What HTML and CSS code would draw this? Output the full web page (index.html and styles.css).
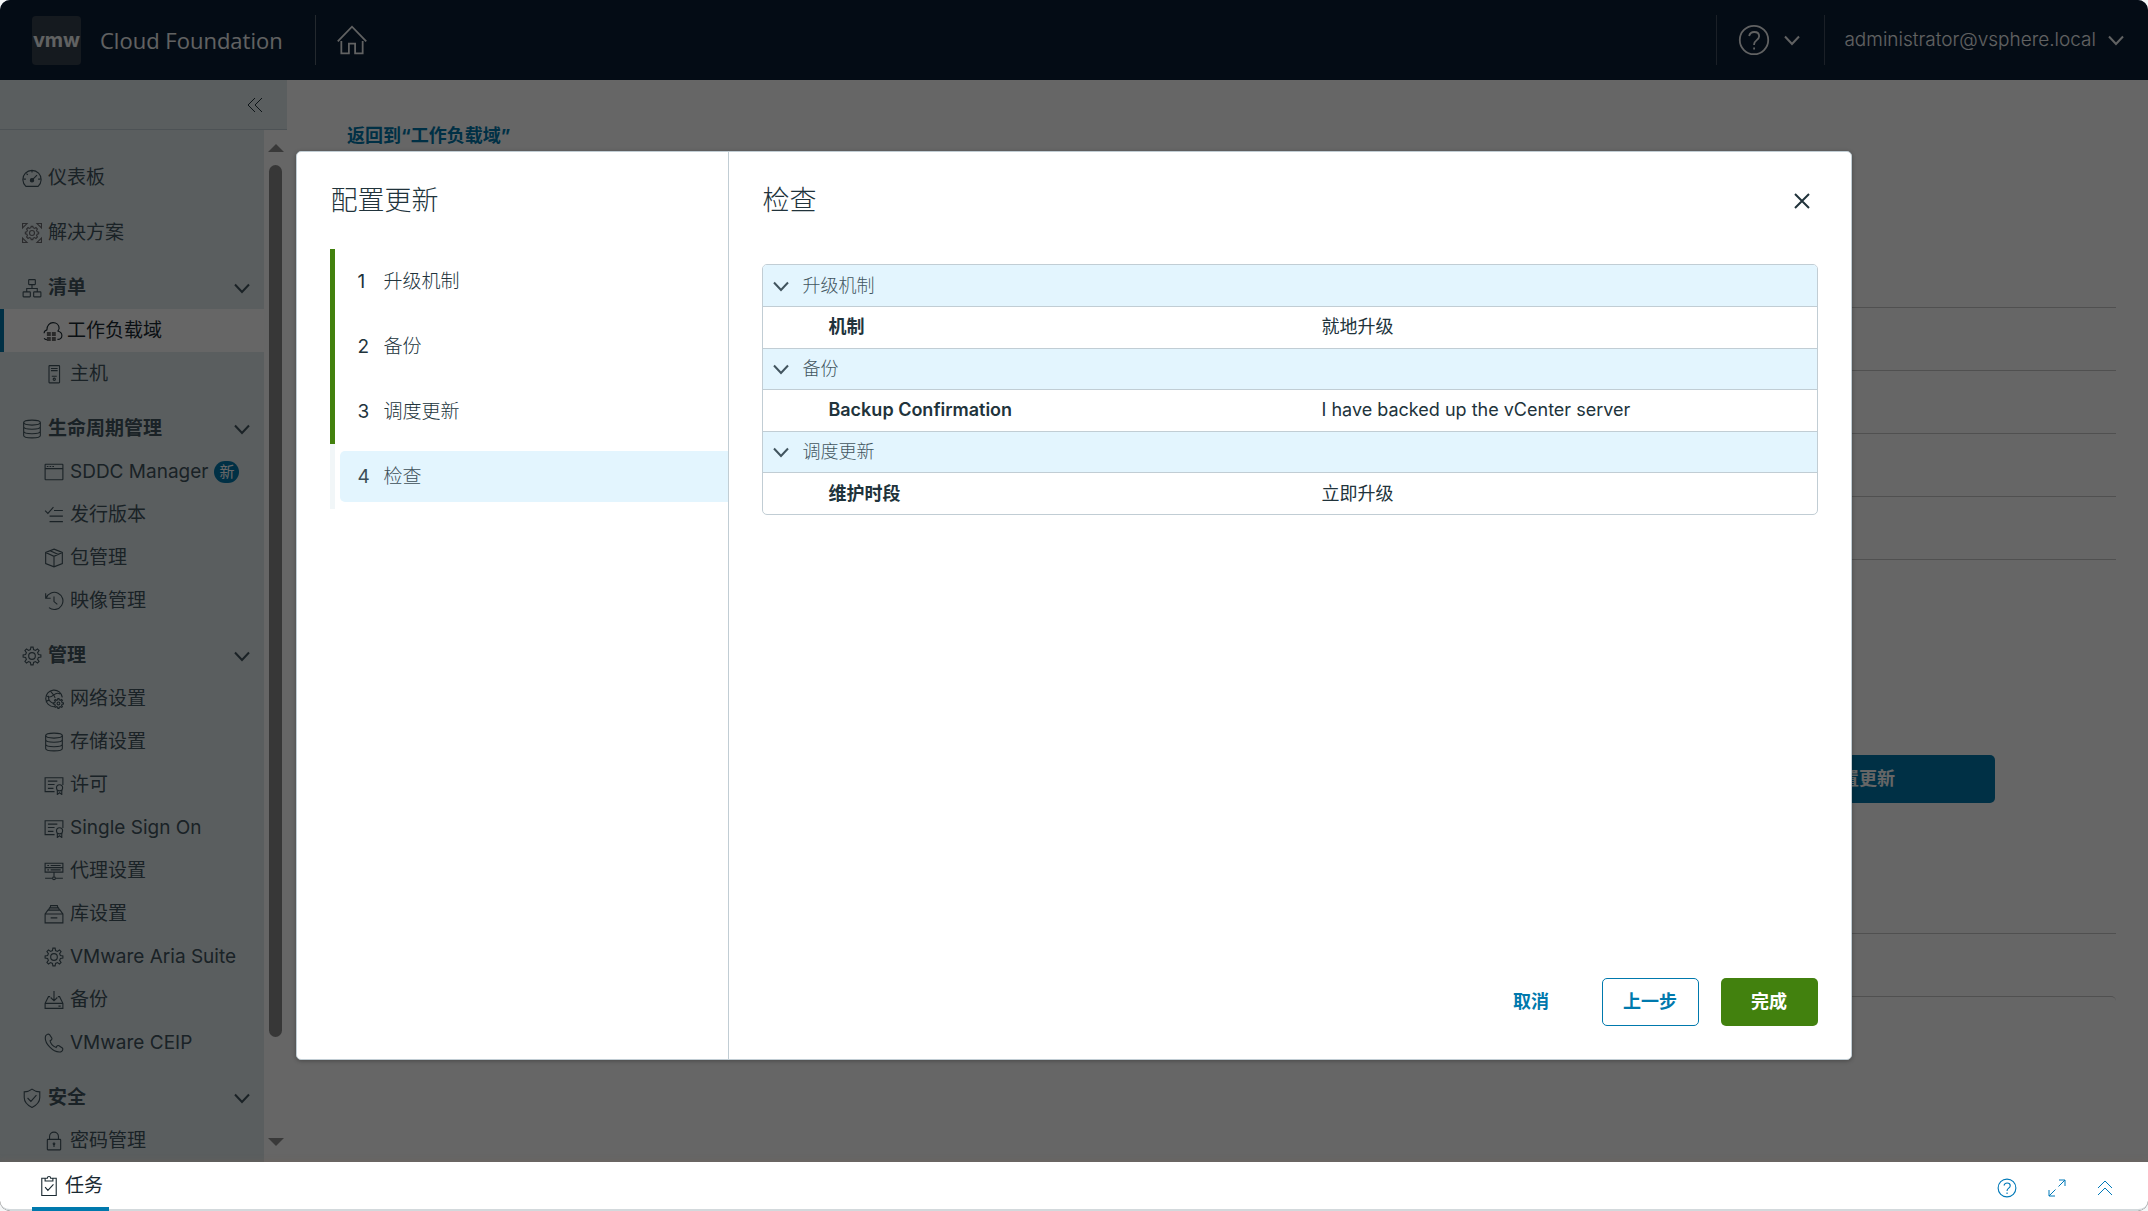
FILE: index.html
```html
<!DOCTYPE html>
<html lang="zh-CN">
<head>
<meta charset="utf-8">
<meta name="viewport" content="width=device-width, initial-scale=1">
<title>Cloud Foundation</title>
<link rel="stylesheet" href="styles.css">
</head>
<body>
<svg class="sprite" aria-hidden="true">
  <symbol id="i-home" viewBox="0 0 36 36"><path d="M2 19.500 18 3l16 16.500M6 19v14h8.500V22h7v11H30V19"/></symbol>
  <symbol id="i-help" viewBox="0 0 36 36"><circle cx="18" cy="18" r="16"/><path d="M12.500 13.500c.8-3 3-4.500 5.700-4.500 3.200 0 5.600 1.900 5.600 4.900 0 4.300-5.700 4.200-5.700 9v.6M18.100 26.300v2.400"/></symbol>
  <symbol id="i-chevron" viewBox="0 0 16 16"><path d="M1 4.500 8 12l7-7.500"/></symbol>
  <symbol id="i-collapse" viewBox="0 0 16 16"><path d="M8 1 1 8l7 7M15 1 8 8l7 7"/></symbol>
  <symbol id="i-up" viewBox="0 0 16 16"><path d="M1 8l7-7 7 7M1 15l7-7 7 7"/></symbol>
  <symbol id="i-expand" viewBox="0 0 18 18"><path d="M11 1h6v6M17 1l-6.500 6.500M7 17H1v-6M1 17l6.500-6.500"/></symbol>
  <symbol id="i-close" viewBox="0 0 16 16"><path d="M1 1l14 14M15 1 1 15"/></symbol>
  <symbol id="i-dash" viewBox="0 0 36 36"><path d="M7 33a16.500 16.500 0 1 1 22 0zM18 4v4M3 20h4M29 20h4M8 10l2.500 2.500M18.500 21.500 27 13"/><circle cx="18" cy="22" r="3" fill="currentColor"/></symbol>
  <symbol id="i-gear" viewBox="0 0 36 36"><circle cx="18" cy="18" r="6"/><path d="M15.200 6.500 16 2h4l.8 4.500 3.300 1.400 3.800-2.600 2.800 2.800-2.600 3.800 1.400 3.300L34 16v4l-4.500.8-1.400 3.300 2.600 3.800-2.800 2.800-3.800-2.600-3.300 1.400L20 34h-4l-.8-4.500-3.300-1.400-3.800 2.600-2.800-2.800 2.600-3.800-1.400-3.300L2 20v-4l4.500-.8 1.400-3.300-2.600-3.800 2.800-2.800 3.800 2.600z"/></symbol>
  <symbol id="i-solution" viewBox="0 0 36 36"><circle cx="18" cy="18" r="4.500"/><path d="M16 8.500l.5-2.500h3l.5 2.500 2.800 1.200 2.300-1.600 2.700 2.700-1.600 2.300 1.200 2.800 2.600.6v3l-2.600.5-1.200 2.800 1.600 2.300-2.700 2.700-2.300-1.600-2.800 1.200-.5 2.600h-3l-.5-2.600-2.800-1.200-2.300 1.600-2.700-2.700 1.600-2.300-1.200-2.800-2.600-.5v-3l2.600-.6 1.200-2.800-1.600-2.300 2.700-2.700 2.300 1.600zM1 9V1h8zM27 1h8v8zM1 27v8h8zM35 27v8h-8z"/></symbol>
  <symbol id="i-tree" viewBox="0 0 36 36"><rect x="12" y="3" width="12" height="9" rx="1"/><rect x="2" y="25" width="13" height="9" rx="1"/><rect x="21" y="25" width="13" height="9" rx="1"/><path d="M18 12v7M8.500 25v-6h19v6"/></symbol>
  <symbol id="i-cloud" viewBox="0 0 36 36"><path d="M2 22c0-3 2-5 5-6C7 8 12 3 18 3s11 4 11 10.500C28 18 27 18 26 18c5 1 8 4 8 8s-3 7-8 7M2 31c1 2 3 2.500 5 2.500"/><path class="solid" d="M7 20h7v7H7zM16 20h7v7h-7zM7 29h7v7H7zM16 29h7v7h-7z"/></symbol>
  <symbol id="i-host" viewBox="0 0 36 36"><rect x="9" y="3" width="19" height="31" rx="1"/><path d="M12.500 8h12M12.500 12h12M14 22h9"/><circle cx="18.500" cy="27.500" r="2"/></symbol>
  <symbol id="i-storage" viewBox="0 0 36 36"><ellipse cx="18" cy="6.500" rx="15" ry="4.500"/><path d="M3 6.500v23C3 32 9.700 34 18 34s15-2 15-4.500v-23M3 14c0 2.500 6.700 4.500 15 4.500S33 16.500 33 14M3 22c0 2.500 6.700 4.500 15 4.500S33 24.500 33 22"/></symbol>
  <symbol id="i-window" viewBox="0 0 36 36"><rect x="2" y="4" width="32" height="28" rx="1"/><path d="M2 12h32M5 8h3M10 8h3M15 8h3"/></symbol>
  <symbol id="i-checks" viewBox="0 0 36 36"><path d="M2 10l5 5L17 4M18 10h16M10 20h24M10 30h24"/></symbol>
  <symbol id="i-box" viewBox="0 0 36 36"><path d="M18 2l15 6v20l-15 6-15-6V8zM3 8l15 7 15-7M18 15v19M11 5l15 6.500"/></symbol>
  <symbol id="i-history" viewBox="0 0 36 36"><path d="M3 4v9h9M4 12.500A15.500 15.500 0 1 1 9 30M18 10v9l6 5"/></symbol>
  <symbol id="i-network" viewBox="0 0 36 36"><path d="M18 32A15 15 0 1 1 33 15M4 12c5 4 8 3 13-1s9-4 12-2M12 4c2 4 6 5 8 12M9 20c-4 1-5 3-5 4M9 20c-1-4-1-6-1-8M9 20c2 4 5 5 8 6"/><circle cx="26" cy="26" r="2.500"/><path d="M24.500 19.500 25 17h2l.5 2.500 2 .8 2.200-1.400 1.400 1.400-1.400 2.200.8 2L35 25v2l-2.500.5-.8 2 1.400 2.200-1.400 1.400-2.200-1.400-2 .8L27 35h-2l-.5-2.500-2-.8-2.200 1.400-1.400-1.400 1.400-2.200-.8-2L17 27v-2l2.500-.5.8-2-1.400-2.200 1.400-1.400 2.200 1.400z"/></symbol>
  <symbol id="i-cert" viewBox="0 0 36 36"><path d="M19 30H2V5h32v13M7 11h17M7 17h12M7 24h10"/><circle cx="28" cy="23" r="5.500"/><path d="M24 27v8l4-3 4 3v-8"/></symbol>
  <symbol id="i-proxy" viewBox="0 0 36 36"><path d="M2 4h32v8H2zM2 12h32v8H2zM6 8h3M12 8h18M6 16h3M12 16h18M18 20v8M2 31h13M21 31h13"/><circle cx="18" cy="31" r="2.500"/></symbol>
  <symbol id="i-library" viewBox="0 0 36 36"><path d="M2 18h32v16H2zM2 18l5-7h22l5 7M8 11l2-4h16l2 4M11 7l1-4h12l1 4M12 25h12"/></symbol>
  <symbol id="i-backup" viewBox="0 0 36 36"><path d="M11 12H8L2 24v9h32v-9l-6-12h-3M2 24h32M18 2v17M12 13.500l6 6 6-6M26 29h4"/></symbol>
  <symbol id="i-phone" viewBox="0 0 36 36"><path d="M3 5c2-3 5-4 7-2l4 6c1 2-1 4-3 5 1 5 6 10 11 12 1-3 3-4 5-3l6 4c2 2 0 6-3 7C17 36-1 18 3 5z"/></symbol>
  <symbol id="i-shield" viewBox="0 0 36 36"><path d="M18 2c5 4 9 5 14 5v10c0 9-6 14-14 18C10 31 4 26 4 17V7c5 0 9-1 14-5zM10 18l6 6 10-11"/></symbol>
  <symbol id="i-lock" viewBox="0 0 36 36"><rect x="6" y="15" width="24" height="19" rx="1"/><path d="M10 15v-5a8 8 0 0 1 16 0v5M18 23v6"/><circle cx="18" cy="23" r="1.500"/></symbol>
  <symbol id="i-task" viewBox="0 0 30 36"><path d="M8 4H2v31h26V4h-6M8 9V4h4c0-4 6-4 6 0h4v5zM8 20l5 6 10-11"/></symbol>
</svg>

<div class="app">
  <header class="header">
    <div class="brand"><span class="logo">vmw</span><span class="product">Cloud Foundation</span></div>
    <a class="home" href="#" aria-label="主页"><svg class="icon-lg"><use href="#i-home"/></svg></a>
    <button class="menu help" type="button" aria-label="帮助"><svg class="icon-lg"><use href="#i-help"/></svg><svg class="chevron"><use href="#i-chevron"/></svg></button>
    <button class="menu user" type="button"><span>administrator@vsphere.local</span><svg class="chevron"><use href="#i-chevron"/></svg></button>
  </header>

  <div class="body">
    <aside class="side">
      <div class="side-top"><button class="collapse" type="button" aria-label="折叠"><svg class="chevron"><use href="#i-collapse"/></svg></button></div>
      <div class="side-scroll">
        <nav class="nav">
          <a class="row top" href="#"><svg class="icon"><use href="#i-dash"/></svg>仪表板</a>
          <a class="row top" href="#"><svg class="icon faint"><use href="#i-solution"/></svg>解决方案</a>

          <button class="row top group" type="button"><svg class="icon"><use href="#i-tree"/></svg><span>清单</span><svg class="chevron"><use href="#i-chevron"/></svg></button>
          <a class="row child active" href="#"><svg class="icon"><use href="#i-cloud"/></svg>工作负载域</a>
          <a class="row child" href="#"><svg class="icon"><use href="#i-host"/></svg>主机</a>

          <button class="row top group" type="button"><svg class="icon"><use href="#i-storage"/></svg><span>生命周期管理</span><svg class="chevron"><use href="#i-chevron"/></svg></button>
          <a class="row child" href="#"><svg class="icon"><use href="#i-window"/></svg>SDDC Manager<span class="badge">新</span></a>
          <a class="row child" href="#"><svg class="icon"><use href="#i-checks"/></svg>发行版本</a>
          <a class="row child" href="#"><svg class="icon"><use href="#i-box"/></svg>包管理</a>
          <a class="row child" href="#"><svg class="icon"><use href="#i-history"/></svg>映像管理</a>

          <button class="row top group" type="button"><svg class="icon"><use href="#i-gear"/></svg><span>管理</span><svg class="chevron"><use href="#i-chevron"/></svg></button>
          <a class="row child" href="#"><svg class="icon"><use href="#i-network"/></svg>网络设置</a>
          <a class="row child" href="#"><svg class="icon"><use href="#i-storage"/></svg>存储设置</a>
          <a class="row child" href="#"><svg class="icon"><use href="#i-cert"/></svg>许可</a>
          <a class="row child" href="#"><svg class="icon"><use href="#i-cert"/></svg>Single Sign On</a>
          <a class="row child" href="#"><svg class="icon"><use href="#i-proxy"/></svg>代理设置</a>
          <a class="row child" href="#"><svg class="icon"><use href="#i-library"/></svg>库设置</a>
          <a class="row child" href="#"><svg class="icon"><use href="#i-gear"/></svg>VMware Aria Suite</a>
          <a class="row child" href="#"><svg class="icon"><use href="#i-backup"/></svg>备份</a>
          <a class="row child" href="#"><svg class="icon"><use href="#i-phone"/></svg>VMware CEIP</a>

          <button class="row top group" type="button"><svg class="icon"><use href="#i-shield"/></svg><span>安全</span><svg class="chevron"><use href="#i-chevron"/></svg></button>
          <a class="row child" href="#"><svg class="icon"><use href="#i-lock"/></svg>密码管理</a>
        </nav>
        <div class="scrollbar" aria-hidden="true"><span class="arrow-up"></span><span class="thumb"></span><span class="arrow-down"></span></div>
      </div>
    </aside>

    <main class="main">
      <a class="back" href="#">返回到“工作负载域”</a>
      <div class="lines"><div></div><div></div><div></div><div></div><div></div></div>
      <button class="btn primary update" type="button">配置更新</button>
      <div class="lines second"><div></div></div>
      <div class="panel"></div>
    </main>
  </div>

  <div class="backdrop">
    <section class="modal" role="dialog" aria-label="配置更新">
      <div class="steps-pane">
        <h1 class="title">配置更新</h1>
        <ol class="steps">
          <li class="step done"><button type="button"><span class="num">1</span>升级机制</button></li>
          <li class="step done"><button type="button"><span class="num">2</span>备份</button></li>
          <li class="step done"><button type="button"><span class="num">3</span>调度更新</button></li>
          <li class="step current"><button type="button"><span class="num">4</span>检查</button></li>
        </ol>
      </div>
      <div class="content-pane">
        <div class="content-head">
          <h2 class="title">检查</h2>
          <button class="close" type="button" aria-label="关闭"><svg class="chevron"><use href="#i-close"/></svg></button>
        </div>
        <div class="review">
          <table>
            <colgroup><col class="col-label"><col></colgroup>
            <tbody>
              <tr class="section"><th colspan="2" scope="rowgroup"><button type="button"><svg class="chevron"><use href="#i-chevron"/></svg>升级机制</button></th></tr>
              <tr><th scope="row">机制</th><td>就地升级</td></tr>
            </tbody>
            <tbody>
              <tr class="section"><th colspan="2" scope="rowgroup"><button type="button"><svg class="chevron"><use href="#i-chevron"/></svg>备份</button></th></tr>
              <tr><th scope="row">Backup Confirmation</th><td>I have backed up the vCenter server</td></tr>
            </tbody>
            <tbody>
              <tr class="section"><th colspan="2" scope="rowgroup"><button type="button"><svg class="chevron"><use href="#i-chevron"/></svg>调度更新</button></th></tr>
              <tr><th scope="row">维护时段</th><td>立即升级</td></tr>
            </tbody>
          </table>
        </div>
        <div class="actions">
          <button class="btn link" type="button">取消</button>
          <button class="btn outline" type="button">上一步</button>
          <button class="btn success" type="button">完成</button>
        </div>
      </div>
    </section>
  </div>

  <footer class="tray">
    <button class="tab" type="button"><svg class="icon"><use href="#i-task"/></svg>任务</button>
    <div class="tools">
      <button type="button" aria-label="帮助"><svg class="icon"><use href="#i-help"/></svg></button>
      <button type="button" aria-label="最大化"><svg class="arrows"><use href="#i-expand"/></svg></button>
      <button type="button" aria-label="展开"><svg class="chevron"><use href="#i-up"/></svg></button>
    </div>
  </footer>
</div>
</body>
</html>
```

FILE: styles.css
```css
* { box-sizing: border-box; }

html, body { height: 100%; margin: 0; }

body {
  background: #f4f6f7;
  color: #21333b;
  font-family: "Inter", "Noto Sans CJK SC", sans-serif;
  font-size: 18px;
  line-height: 24px;
}

button {
  margin: 0;
  padding: 0;
  border: 0;
  background: none;
  color: inherit;
  font: inherit;
  text-align: left;
  cursor: pointer;
}

a { color: inherit; text-decoration: none; }

svg { display: block; flex: none; fill: none; stroke: currentColor; stroke-width: 2; }

.sprite { position: absolute; width: 0; height: 0; }
.solid { fill: #6a6a6a; stroke: none; }
.icon { width: 20px; height: 20px; }
.icon-lg { width: 32px; height: 32px; }
.chevron { width: 16px; height: 16px; }
.arrows { width: 18px; height: 18px; stroke-width: 1; }

.app {
  position: relative;
  display: flex;
  flex-direction: column;
  height: 100vh;
  border-radius: 10px;
  overflow: hidden;
  background: #fff;
}

/* Header */
.header {
  flex: none;
  display: flex;
  align-items: center;
  height: 80px;
  background: #0c1f35;
  color: #f2f4f5;
}
.brand {
  display: flex;
  align-items: center;
  gap: 19px;
  height: 50px;
  padding: 0 32px;
  border-right: 1px solid #5a6674;
}
.logo {
  display: grid;
  place-items: center;
  width: 49px;
  height: 49px;
  border-radius: 4px;
  background: #36424f;
  font-size: 20px;
  font-weight: 700;
}
.product { font-family: "Open Sans", sans-serif; font-size: 22px; line-height: 32px; }
.home { padding: 0 20px; }
.menu {
  display: flex;
  align-items: center;
  gap: 14px;
  height: 50px;
  padding: 0 24px 0 21px;
  border-left: 1px solid #455261;
}
.help { margin-left: auto; }
.user { gap: 12px; padding-left: 19px; font-size: 19px; font-weight: 300; }

/* Sidebar */
.body { flex: 1; display: flex; min-height: 0; }
.side {
  flex: none;
  display: flex;
  flex-direction: column;
  width: 287px;
}
.side-top {
  flex: none;
  display: flex;
  align-items: center;
  justify-content: flex-end;
  height: 50px;
  padding: 0 24px;
  background: #e1ebed;
  border-bottom: 1px solid #c1cdd4;
}
.side-top .chevron { stroke-width: 1; }
.side-scroll { flex: 1; display: flex; min-height: 0; }
.nav {
  flex: 1;
  padding-top: 26px;
  overflow: hidden;
  background: #e1ebed;
  color: #42555f;
  font-size: 19px;
}
.row {
  display: flex;
  align-items: center;
  gap: 6px;
  width: 100%;
  height: 43px;
  padding-left: 22px;
}
.top + .top, .child + .top { margin-top: 12px; }
.group { padding-right: 14px; font-weight: 700; }
.group .chevron { margin-left: auto; }
.child { padding-left: 44px; }
.active {
  padding-left: 39px;
  gap: 4px;
  border-left: 4px solid #0079ad;
  background: #fff;
  color: #1b2a32;
}
.faint { color: #6b6b70; }
.badge {
  padding: 0 5px;
  border-radius: 11px;
  background: #0079ad;
  color: #fff;
  font-size: 15px;
  line-height: 22px;
}
.scrollbar {
  flex: none;
  display: flex;
  flex-direction: column;
  align-items: center;
  width: 23px;
  padding: 14px 0 16px;
}
.arrow-up, .arrow-down { border: 8px solid transparent; }
.arrow-up { border-top: 0; border-bottom-color: #909090; }
.arrow-down { border-bottom: 0; border-top-color: #909090; margin-top: auto; }
.thumb { width: 13px; height: 87%; margin-top: 13px; border-radius: 7px; background: #8b8b8b; }

/* Page behind the dialog */
.main { flex: 1; min-width: 0; padding: 44px 32px 0 60px; overflow: hidden; }
.back { display: block; color: #0079ad; font-weight: 700; }
.lines { margin-top: 159px; }
.lines div { height: 63px; border-top: 1px solid #c8c8c8; }
.btn {
  min-width: 97px;
  height: 48px;
  border: 1px solid transparent;
  border-radius: 5px;
  font-weight: 700;
  text-align: center;
}
.primary { background: #0079ad; color: #fff; }
.update { display: block; width: 272px; margin: 133px 121px 0 auto; }
.second { margin-top: 130px; }
.panel { height: 120px; border-top: 1px solid #c8c8c8; border-radius: 5px; }

/* Dialog */
.backdrop {
  position: absolute;
  inset: 0;
  display: grid;
  place-items: center;
  background: rgba(0, 0, 0, 0.6);
}
.modal {
  display: flex;
  width: 72.4%;
  height: 75%;
  border: 1px solid #c1cdd4;
  border-radius: 5px;
  background: #fff;
  box-shadow: 0 1px 4px rgba(0, 0, 0, 0.3);
}
.steps-pane {
  flex: none;
  width: 432px;
  padding: 32px 0 0 33px;
  border-right: 1px solid #c1cdd4;
}
.title { margin: 0; font-size: 27px; font-weight: 300; line-height: 34px; }
.steps { margin: 31px 0 0; padding: 0; list-style: none; font-size: 19px; font-weight: 300; }
.step { height: 65px; padding: 7px 0 7px 5px; border-left: 5px solid #42810e; }
.step button {
  display: flex;
  align-items: center;
  width: 100%;
  height: 51px;
  padding-left: 17px;
  border-radius: 5px 0 0 5px;
}
.num { width: 26px; font-weight: 400; }
.current { border-left-color: #f1f6f8; }
.current button { background: #e3f5fe; color: #3c4e57; }

.content-pane { flex: 1; display: flex; flex-direction: column; padding: 32px 33px 33px; }
.content-head { display: flex; align-items: center; justify-content: space-between; }
.close { padding: 0 8px; }
.close .chevron { stroke-width: 2; }
.review {
  margin-top: 46px;
  border: 1px solid #c1cdd4;
  border-radius: 5px;
  overflow: hidden;
}
.review table { width: 100%; border-collapse: collapse; table-layout: fixed; }
.col-label { width: 53%; }
.review tr + tr, .review tbody + tbody { border-top: 1px solid #c1cdd4; }
.review th, .review td { height: 42px; padding: 0; text-align: left; font-weight: 300; }
.review td { font-weight: 400; }
.review tr + tr th { padding-left: 65px; font-weight: 600; }
.review .section th { height: 41px; background: #e3f5fe; color: #42555f; }
.section button { display: flex; align-items: center; gap: 13px; padding-left: 10px; }
.actions { display: flex; justify-content: flex-end; gap: 22px; margin-top: auto; }
.link, .outline { color: #0079ad; }
.outline { border-color: #0079ad; }
.success { background: #42810e; color: #fff; }

/* Task tray */
.tray {
  position: relative;
  flex: none;
  display: flex;
  justify-content: space-between;
  height: 49px;
  padding: 0 35px 0 32px;
  border-bottom: 2px solid #d3d9dc;
  border-radius: 0 0 10px 10px;
  background: #fff;
  box-shadow: 0 -1px 6px rgba(120, 100, 90, 0.4);
}
.tab {
  display: flex;
  align-items: center;
  gap: 6px;
  height: 49px;
  padding: 2px 6px 0 7px;
  border-bottom: 4px solid #0079ad;
  color: #1b2a32;
  font-size: 19px;
}
.tools { display: flex; align-items: center; gap: 31px; padding-top: 5px; color: #0079b8; }
.tools .chevron { stroke-width: 1; }
```
